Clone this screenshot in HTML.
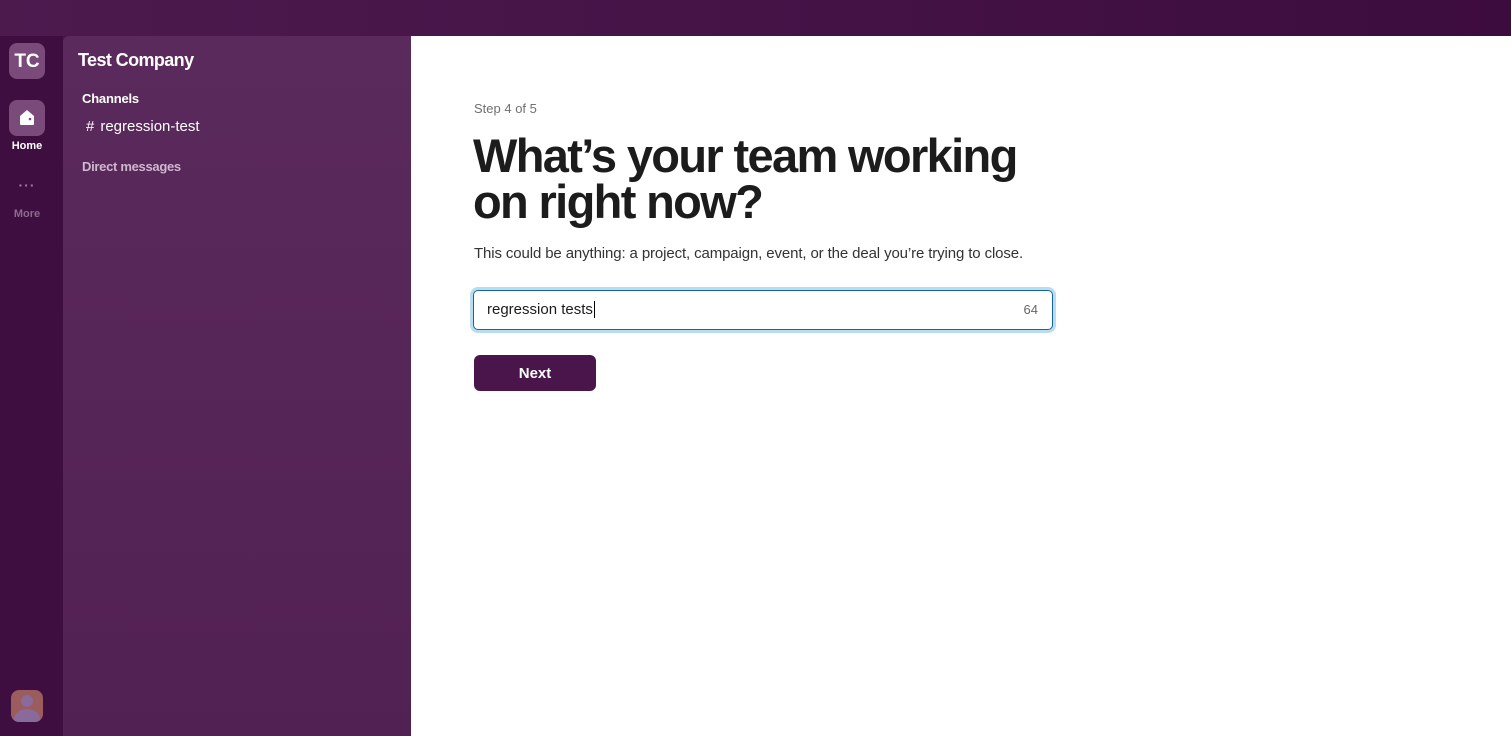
<!DOCTYPE html>
<html><head><style>
*{margin:0;padding:0;box-sizing:border-box}
body{width:1511px;height:736px;overflow:hidden;font-family:"Liberation Sans",sans-serif;background:linear-gradient(90deg,#4a154b,#3f0e40);position:relative}
.top{position:absolute;left:0;top:0;width:1511px;height:36px;background:linear-gradient(90deg,#4d1a4e,#3d0c3e)}
.rail{position:absolute;left:0;top:36px;width:63px;height:700px;background:#3f0e40}
.side{position:absolute;left:63px;top:36px;width:348px;height:700px;background:linear-gradient(180deg,#5b2a5c,#522153);border-top-left-radius:6px}
.main{position:absolute;left:411px;top:36px;width:1100px;height:700px;background:#fff}
.tc{position:absolute;left:9px;top:43px;width:36px;height:36px;border-radius:8px;background:#7a4a7b;color:#fff;font-weight:bold;font-size:19px;text-align:center;line-height:38px}
.home{position:absolute;left:9px;top:100px;width:36px;height:36px;border-radius:8px;background:#7a4a7b}
.lbl{position:absolute;width:54px;left:0;text-align:center;font-size:11px;font-weight:bold}
</style></head><body>
<div class="top"></div>
<div class="rail"></div>
<div class="tc">TC</div>
<div class="home"><svg width="36" height="36" viewBox="0 0 36 36"><path d="M11 16 L18 10 L25 16 V24 Q25 25 24 25 H12 Q11 25 11 24Z" fill="#fff"/><circle cx="21" cy="19" r="1.3" fill="#7a4a7b"/></svg></div>
<div class="lbl" style="top:140px;color:#fff">Home</div>
<div class="lbl" style="top:177px;color:#9a7c9b;font-size:14px;letter-spacing:1px">···</div>
<div class="lbl" style="top:208px;color:#8c6a8d">More</div>
<div style="position:absolute;left:11px;top:690px;width:32px;height:32px;border-radius:8px;background:#9a5c5c;overflow:hidden"><div style="position:absolute;left:10px;top:5px;width:12px;height:12px;border-radius:50%;background:#8a6a9a"></div><div style="position:absolute;left:3px;top:19px;width:26px;height:20px;border-radius:50%;background:#8a6a9a"></div></div>
<div class="side">
<div style="position:absolute;left:15px;top:14px;color:#fff;font-weight:bold;font-size:18px;letter-spacing:-0.6px">Test Company</div>
<div style="position:absolute;left:19px;top:55px;color:#fff;font-weight:bold;font-size:13px;letter-spacing:-0.2px">Channels</div>
<div style="position:absolute;left:23px;top:82px;color:#fff;font-size:15px"><span style="margin-right:6px">#</span>regression-test</div>
<div style="position:absolute;left:19px;top:123px;color:#cdb8cd;font-weight:bold;font-size:13px;letter-spacing:-0.3px">Direct messages</div>
</div>
<div class="main">
<div style="position:absolute;left:63px;top:65px;color:#707070;font-size:13px">Step 4 of 5</div>
<div style="position:absolute;left:62px;top:97px;color:#1d1c1d;font-weight:bold;font-size:47px;line-height:46px;letter-spacing:-1.65px;width:600px">What’s your team working on right now?</div>
<div style="position:absolute;left:63px;top:209px;color:#333;font-size:15px;letter-spacing:-0.12px">This could be anything: a project, campaign, event, or the deal you’re trying to close.</div>
<div style="position:absolute;left:62px;top:254px;width:580px;height:40px;border:1px solid #1264a3;border-radius:5px;box-shadow:0 0 0 3px #b9dcef;font-size:15px;color:#1d1c1d;line-height:38px;padding-left:13px">regression tests<span style="border-left:1px solid #000;margin-left:1px"></span><span style="position:absolute;right:14px;color:#666;font-size:13px">64</span></div>
<div style="position:absolute;left:63px;top:319px;width:122px;height:36px;border-radius:6px;background:#4a154b;color:#fff;font-weight:bold;font-size:15px;text-align:center;line-height:37px">Next</div>
</div>
</body></html>
